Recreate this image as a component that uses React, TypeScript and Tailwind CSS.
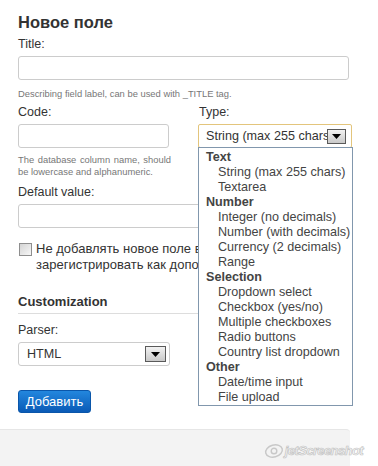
import React from "react";

function Arrow({ w, h }: { w: string; h: string }) {
  return (
    <div
      className={`${w} ${h} flex items-center justify-center border border-[#5a5a5a] bg-linear-to-b from-[#f2f2f2] to-[#c9c9c9]`}
    >
      <svg width="9" height="5" viewBox="0 0 9 5">
        <path d="M0 0h9L4.5 5z" fill="#000" />
      </svg>
    </div>
  );
}

const groups: { label: string; items: string[] }[] = [
  { label: "Text", items: ["String (max 255 chars)", "Textarea"] },
  {
    label: "Number",
    items: ["Integer (no decimals)", "Number (with decimals)", "Currency (2 decimals)", "Range"],
  },
  {
    label: "Selection",
    items: ["Dropdown select", "Checkbox (yes/no)", "Multiple checkboxes", "Radio buttons", "Country list dropdown"],
  },
  { label: "Other", items: ["Date/time input", "File upload"] },
];

const justWords = ["The", "database", "column", "name,", "should"];

export default function App() {
  return (
    <div className="relative w-[378px] h-[466px] bg-white overflow-hidden font-['Liberation_Sans',Arial,sans-serif] text-[#333]">
      <div className="pl-[18px] pt-[12px] w-[352px]">
        <h1 className="text-[16.5px] font-bold leading-[20px] text-[#333]">Новое поле</h1>
        <div className="mt-[4px] text-[12.5px] leading-[16px]">Title:</div>
        <div className="mt-[4px] h-[24px] w-[331px] border border-[#cccccc] rounded-[3px] bg-white" />
        <p className="mt-[8px] text-[9.4px] leading-[12px] text-[#777] whitespace-nowrap">
          Describing field label, can be used with _TITLE tag.
        </p>

        <div className="mt-[4px] flex gap-[29px]">
          <div className="w-[151px]">
            <div className="text-[12.5px] leading-[16px]">Code:</div>
            <div className="mt-[4px] h-[24px] w-[151px] border border-[#cccccc] rounded-[3px] bg-white" />
            <div className="mt-[6px] w-[153px] text-[9.4px] leading-[12px] text-[#777]">
              <p className="flex justify-between whitespace-nowrap">
                {justWords.map((w) => (
                  <span key={w}>{w}</span>
                ))}
              </p>
              <p className="whitespace-nowrap">be lowercase and alphanumeric.</p>
            </div>
          </div>
          <div className="relative w-[154px]">
            <div className="pl-[1px] text-[12.5px] leading-[16px]">Type:</div>
            <div className="mt-[4px] h-[24px] w-[154px] flex items-center border border-[#e3c57c] rounded-[2px] bg-white pl-[7px] pr-[5px]">
              <span className="flex-1 overflow-hidden whitespace-nowrap text-[12.6px] text-[#333]">
                String (max 255 chars)
              </span>
              <Arrow w="w-[19px]" h="h-[15px]" />
            </div>
            <div className="absolute left-0 top-[43px] z-10 w-[155px] border border-[#8197ad] bg-white pt-[2px] text-[12.6px] leading-[15px] text-[#444]">
              {groups.map((g) => (
                <div key={g.label}>
                  <div className="pl-[7px] font-bold text-[#444]">{g.label}</div>
                  {g.items.map((it) => (
                    <div key={it} className="pl-[19px] whitespace-nowrap">
                      {it}
                    </div>
                  ))}
                </div>
              ))}
            </div>
          </div>
        </div>

        <div className="mt-[6px] text-[12.5px] leading-[16px]">Default value:</div>
        <div className="mt-[4px] h-[24px] w-[331px] border border-[#cccccc] rounded-[3px] bg-white" />

        <div className="mt-[13px] flex items-start gap-[4px] text-[13px] leading-[16px]">
          <div className="mt-[2px] ml-[1px] w-[13px] h-[13px] shrink-0 border border-[#8e8e8e] bg-linear-to-br from-[#d4d4d4] to-[#f7f7f7]" />
          <div className="whitespace-nowrap">
            <div>Не добавлять новое поле в Базу данных</div>
            <div>зарегистрировать как дополнительное</div>
          </div>
        </div>

        <div className="mt-[20px] border-b border-[#dddddd] pb-[2px] w-[332px] text-[13px] font-bold leading-[18px]">
          Customization
        </div>
        <div className="mt-[8px] text-[12.5px] leading-[16px]">Parser:</div>
        <div className="mt-[4px] h-[24px] w-[152px] flex items-center border border-[#cccccc] rounded-[3px] bg-white pl-[8px] pr-[3px]">
          <span className="flex-1 text-[12.6px] text-[#333]">HTML</span>
          <Arrow w="w-[21px]" h="h-[16px]" />
        </div>

        <button className="mt-[24px] w-[73px] h-[23px] rounded-[3px] border border-[#0a56aa] bg-linear-to-b from-[#2387de] to-[#0a5ab6] text-white text-[13px] leading-[21px]">
          Добавить
        </button>
      </div>

      <div className="mt-[16px] w-[350px] h-[40px] bg-[#f3f3f3] border-t border-[#e6e6e6] rounded-tr-[4px]" />

      <div className="absolute right-[15px] bottom-[6px] flex items-center gap-[1px]">
        <svg width="20" height="16" viewBox="0 0 20 16">
          <ellipse cx="10" cy="8" rx="8.5" ry="6" fill="none" stroke="#c8c8c8" strokeWidth="1.4" transform="rotate(-15 10 8)" />
          <circle cx="10" cy="8" r="2.8" fill="none" stroke="#c8c8c8" strokeWidth="1.4" />
        </svg>
        <span className="italic font-bold text-[13px] leading-[18px] text-transparent [-webkit-text-stroke:0.7px_#c4c4c4] font-['Liberation_Sans',sans-serif] tracking-[-0.6px]">
          jetScreenshot
        </span>
      </div>
    </div>
  );
}
